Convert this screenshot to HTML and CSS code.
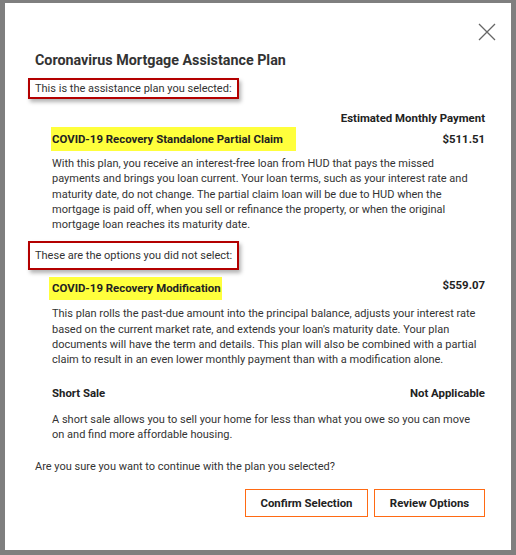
FILE: index.html
```html
<!DOCTYPE html>
<html>
<head>
<meta charset="utf-8">
<link rel="stylesheet" href="styles.css">
</head>
<body>
<div class="backdrop">
  <div class="modal">
    <button class="close" aria-label="Close">
      <svg width="18" height="18" viewBox="0 0 18 18"><path d="M1 1L17 17M17 1L1 17" stroke="#666" stroke-width="1.3" fill="none"/></svg>
    </button>
    <h1 class="title">Coronavirus Mortgage Assistance Plan</h1>
    <div class="callout">This is the assistance plan you selected:</div>
    <div class="section">
      <div class="est">Estimated Monthly Payment</div>
      <div class="plan-row first">
        <span class="hl hl-a">COVID-19 Recovery Standalone Partial Claim</span>
        <span class="amt">$511.51</span>
      </div>
      <p class="desc desc-a">With this plan, you receive an interest-free loan from HUD that pays the missed payments and brings you loan current. Your loan terms, such as your interest rate and maturity date, do not change. The partial claim loan will be due to HUD when the mortgage is paid off, when you sell or refinance the property, or when the original mortgage loan reaches its maturity date.</p>
    </div>
    <div class="callout second">These are the options you did not select:</div>
    <div class="section">
      <div class="plan-row">
        <span class="hl hl-b">COVID-19 Recovery Modification</span>
        <span class="amt">$559.07</span>
      </div>
      <p class="desc desc-b">This plan rolls the past-due amount into the principal balance, adjusts your interest rate based on the current market rate, and extends your loan's maturity date. Your plan documents will have the term and details. This plan will also be combined with a partial claim to result in an even lower monthly payment than with a modification alone.</p>
      <div class="plan-row plain">
        <span class="name">Short Sale</span>
        <span class="amt">Not Applicable</span>
      </div>
      <p class="desc desc-c">A short sale allows you to sell your home for less than what you owe so you can move on and find more affordable housing.</p>
    </div>
    <p class="confirm">Are you sure you want to continue with the plan you selected?</p>
    <div class="actions">
      <button class="btn btn-confirm">Confirm Selection</button>
      <button class="btn btn-review">Review Options</button>
    </div>
  </div>
</div>
</body>
</html>
```

FILE: styles.css
```css
html, body {
  margin: 0;
  padding: 0;
  background: #7f7f7f;
}
body {
  font-family: Roboto, "Liberation Sans", sans-serif;
  color: #333;
}
.backdrop {
  width: 516px;
  height: 555px;
  padding: 3px 0 0 5px;
  box-sizing: border-box;
}
.modal {
  position: relative;
  width: 506px;
  height: 547px;
  background: #fff;
  box-sizing: border-box;
  padding: 47px 26px 0 30px;
}
.close {
  position: absolute;
  top: 20px;
  right: 15px;
  padding: 0;
  border: 0;
  background: none;
  width: 18px;
  height: 18px;
}
.close svg { display: block; }
.title {
  margin: 0;
  font-size: 14.3px;
  font-weight: 700;
  color: #333;
  line-height: 20px;
}
.callout {
  display: inline-block;
  margin: 8px 0 0 -7px;
  padding: 0 5px;
  border: 2px solid #b30000;
  font-size: 11px;
  line-height: 17px;
  color: #333;
  box-shadow: 2px 3px 4px rgba(0,0,0,0.3);
}
.callout.second {
  margin-top: 9px;
  padding: 4px 5px;
}
.section {
  padding-left: 17px;
}
.est {
  text-align: right;
  font-size: 11.4px;
  font-weight: 700;
  color: #222;
  margin-top: 11px;
  line-height: 16px;
}
.plan-row {
  display: flex;
  justify-content: space-between;
  align-items: center;
  font-size: 11.4px;
  font-weight: 700;
  color: #222;
}
.plan-row.first {
  margin-top: 1px;
}
.hl {
  background: #ffff3c;
}
.hl-a {
  line-height: 24px;
  padding: 0 13px 0 1px;
  margin-left: -1px;
}
.hl-b {
  margin-top: 7px;
  padding: 0 1px 0 3px;
  margin-left: -3px;
  line-height: 23px;
}
.plain {
  margin-top: 15px;
  line-height: 20px;
}
.desc {
  margin: 0;
  font-size: 11px;
  line-height: 15.3px;
  color: #333;
}
.desc-a {
  margin-top: 5px;
  padding-right: 10px;
}
.desc-b {
  margin-top: 6px;
}
.desc-c {
  margin-top: 9px;
}
.confirm {
  margin: 17px 0 0 0;
  font-size: 11px;
  line-height: 16px;
  color: #333;
}
.actions {
  display: flex;
  justify-content: flex-end;
  gap: 6px;
  margin-top: 14px;
}
.btn {
  font-family: Roboto, "Liberation Sans", sans-serif;
  font-size: 11.4px;
  font-weight: 700;
  color: #222;
  background: #fff;
  border: 1.5px solid #ff6a13;
  height: 28px;
  padding: 0;
}
.btn-confirm { width: 123px; }
.btn-review { width: 111px; }
```
